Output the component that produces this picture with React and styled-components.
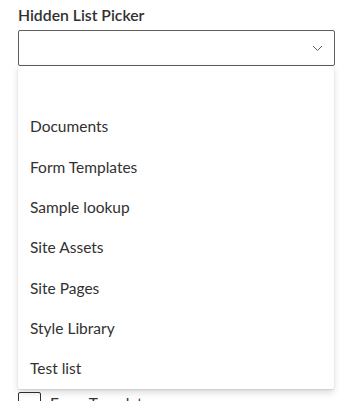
import React from "react";
import styled, { createGlobalStyle } from "styled-components";

const GlobalStyle = createGlobalStyle`
  html, body { margin: 0; padding: 0; background: #ffffff; }
  body {
    font-family: "Lato", "Liberation Sans", sans-serif;
    color: #323130;
    -webkit-font-smoothing: antialiased;
  }
`;

const Page = styled.div`
  position: relative;
  width: 317px;
  padding: 5px 19px 0 18px;
`;

const Label = styled.label`
  display: block;
  font-size: 15.75px;
  font-weight: 600;
  line-height: 20px;
  color: #323130;
  margin-bottom: 5px;
`;

const Field = styled.div`
  position: relative;
`;

const Select = styled.div`
  box-sizing: border-box;
  height: 36px;
  border: 1px solid #605e5c;
  border-radius: 2px;
  display: flex;
  align-items: center;
  justify-content: flex-end;
  padding-right: 11px;
  background: #fff;
`;

const Callout = styled.ul`
  position: absolute;
  top: 36px;
  left: 0;
  width: 316px;
  margin: 0;
  padding: 0;
  list-style: none;
  background: #fff;
  border-radius: 2px;
  box-shadow: 0 3.2px 7.2px 0 rgba(0, 0, 0, 0.132), 0 0.6px 1.8px 0 rgba(0, 0, 0, 0.108);
  z-index: 2;
`;

const Option = styled.li`
  box-sizing: border-box;
  height: 40.33px;
  display: flex;
  align-items: center;
  padding-left: 12px;
  font-size: 15.5px;
  color: #323130;
  white-space: nowrap;
`;

const CheckList = styled.div`
  display: flex;
  flex-direction: column;
  gap: 10px;
  margin-top: 326px;
`;

const CheckRow = styled.div`
  display: flex;
  align-items: center;
  gap: 9px;
  font-size: 15.5px;
  color: #323130;
`;

const Box = styled.span`
  box-sizing: border-box;
  width: 23px;
  height: 22px;
  border: 1px solid #323130;
  border-radius: 2px;
  flex: none;
`;

const Chevron = () => (
  <svg width="11" height="7" viewBox="0 0 11 7" aria-hidden="true">
    <polyline points="1,1 5.5,5.5 10,1" fill="none" stroke="#605e5c" strokeWidth="1" />
  </svg>
);

const options = ["", "Documents", "Form Templates", "Sample lookup", "Site Assets", "Site Pages", "Style Library", "Test list"];

export default function App() {
  return (
    <>
      <GlobalStyle />
      <Page>
        <Label>Hidden List Picker</Label>
        <Field>
          <Select>
            <Chevron />
          </Select>
          <Callout>
            {options.map((o, i) => (
              <Option key={i}>{o}</Option>
            ))}
          </Callout>
        </Field>
        <CheckList>
          <CheckRow><Box />Form Templates</CheckRow>
        </CheckList>
      </Page>
    </>
  );
}
